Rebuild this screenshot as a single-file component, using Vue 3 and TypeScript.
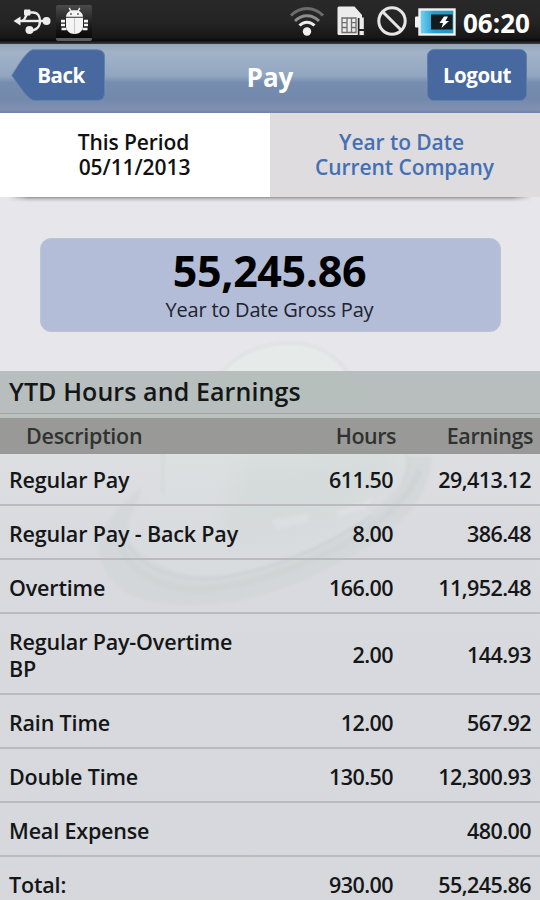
<script setup lang="ts">
interface PayRow {
  description: string
  hours: string
  earnings: string
  tall?: boolean
}

const rows: PayRow[] = [
  { description: 'Regular Pay', hours: '611.50', earnings: '29,413.12' },
  { description: 'Regular Pay - Back Pay', hours: '8.00', earnings: '386.48' },
  { description: 'Overtime', hours: '166.00', earnings: '11,952.48' },
  { description: 'Regular Pay-Overtime BP', hours: '2.00', earnings: '144.93', tall: true },
  { description: 'Rain Time', hours: '12.00', earnings: '567.92' },
  { description: 'Double Time', hours: '130.50', earnings: '12,300.93' },
  { description: 'Meal Expense', hours: '', earnings: '480.00' },
  { description: 'Total:', hours: '930.00', earnings: '55,245.86' },
]
</script>

<template>
  <div class="screen">
    <header class="status">
      <div class="status-left">
        <svg class="usb" width="40" height="30" viewBox="0 0 40 30">
          <g fill="none" stroke="#ededed" stroke-width="2.400">
            <path d="M6 15H34" />
            <path d="M10 15C14.500 14 13 6.500 18 6.500H21C26 6.500 28 11 28 15" />
            <path d="M18 24.500C24 24.500 28 21 28 15" />
          </g>
          <g fill="#ededed">
            <path d="M1.500 15L8.500 10.500V19.500Z" />
            <circle cx="34.500" cy="15" r="4" />
            <rect x="12" y="3.500" width="6.500" height="6" rx="1" />
            <circle cx="17.500" cy="24" r="4" />
          </g>
        </svg>
        <div class="debug">
          <svg width="30" height="30" viewBox="0 0 30 30">
            <g stroke="#f4f4f4" stroke-width="1.500" stroke-linecap="round">
              <path d="M9.500 2.500L11.500 6M19.500 2.500L17.500 6" />
            </g>
            <path d="M6 10.700C6.500 6 10 4.200 14.500 4.200S22.500 6 23 10.700Z" fill="#f4f4f4" />
            <circle cx="11" cy="8" r=".9" fill="#555" />
            <circle cx="18" cy="8" r=".9" fill="#555" />
            <path d="M6 11.700H23V20C23 24.500 19.500 28 14.500 28S6 24.500 6 20Z" fill="#f4f4f4" />
            <path d="M14.500 12V27.500" stroke="#c4c4c4" stroke-width="1" />
            <path d="M1 15.200H5M1 19H5M1.500 23H6.500M28 15.200H24M28 19H24M27.500 23H22.500" stroke="#f4f4f4" stroke-width="2.700" fill="none" />
          </svg>
        </div>
      </div>
      <div class="status-right">
        <svg width="36" height="32" viewBox="0 0 36 32">
          <g fill="none" stroke-width="3">
            <path d="M2 11.500C11 2 25 2 34 11.500" stroke="#6c6c6c" />
            <path d="M6 17C13 10 23 10 30 17" stroke="#8d8d8d" />
            <path d="M10.500 21.500C15 17 21 17 25.500 21.500" stroke="#ececec" />
          </g>
          <circle cx="18" cy="27.500" r="4.200" fill="#f0f0f0" />
        </svg>
        <svg width="30" height="32" viewBox="0 0 30 32">
          <path d="M3 1.500H18.500L26 10V16H23V30H3Q1.500 30 1.500 28.500V3Q1.500 1.500 3 1.500Z" fill="#ececec" />
          <path d="M6 13H20V27.500H6ZM6 17.700H11M15.500 17.700H20M6 22.500H11M15.500 22.500H20M11 13V27.500M15.500 13V27.500" fill="none" stroke="#6e6e6e" stroke-width="1.300" />
          <rect x="21.800" y="13" width="7.500" height="18" fill="#242424" />
          <rect x="23.500" y="12.500" width="4.300" height="11.500" fill="#ececec" />
          <rect x="23.500" y="26" width="4.300" height="4" fill="#ececec" />
        </svg>
        <svg width="32" height="32" viewBox="0 0 32 32">
          <circle cx="16" cy="16" r="13.200" fill="none" stroke="#e6e6e6" stroke-width="3" />
          <path d="M6.700 6.700L25.300 25.300" stroke="#e6e6e6" stroke-width="3" />
        </svg>
        <svg width="41" height="30" viewBox="0 0 41 30">
          <defs>
            <linearGradient id="charge" x1="0" x2="1" y1="0" y2="0">
              <stop offset="0" stop-color="#7bd5f5" />
              <stop offset=".4" stop-color="#25a0d3" />
              <stop offset="1" stop-color="#2494c5" />
            </linearGradient>
          </defs>
          <rect x="0" y="9.500" width="5" height="11" rx="1" fill="#f1f1f1" />
          <rect x="4.500" y="2.500" width="35" height="25" fill="url(#charge)" stroke="#f1f1f1" stroke-width="2.400" />
          <rect x="16" y="7.500" width="21.500" height="15" fill="#151a1d" />
          <path d="M29 9.500L24.500 16H28L26.500 21L34 14H30.500L33 9.500Z" fill="#fff" />
        </svg>
        <span class="clock">06:20</span>
      </div>
    </header>

    <nav class="bar">
      <button class="back">
        <svg class="back-shape" width="96" height="53" viewBox="0 0 96 53">
          <path d="M21.500 .8H86Q93.500 .8 93.500 8V44Q93.500 51.500 86 51.500H24C17 51.500 8 36 .8 26.500C7 17 15 2.500 21.500 .8Z" fill="#48699f" stroke="#6281ae" stroke-width="1" />
        </svg>
        <span class="back-label">Back</span>
      </button>
      <h1 class="title">Pay</h1>
      <button class="logout"><span>Logout</span></button>
    </nav>

    <div class="tabs">
      <div class="tab active"><span class="first">This Period</span><span>05/11/2013</span></div>
      <div class="tab"><span class="first">Year to Date</span><span>Current Company</span></div>
    </div>
    <div class="tab-shadow"></div>

    <main class="body">
      <svg class="hat" width="360" height="290" viewBox="90 330 360 290">
        <defs>
          <filter id="soft" x="-10%" y="-10%" width="120%" height="120%"><feGaussianBlur stdDeviation="1.500" /></filter>
          <filter id="softer" x="-20%" y="-20%" width="140%" height="140%"><feGaussianBlur stdDeviation="9" /></filter>
        </defs>
        <path d="M222 372C242 350 265 344 290 344C318 344 337 356 350 376L410 450C405 500 340 555 240 580C190 590 145 575 130 545C125 520 150 500 162 490V450Z" fill="#e6ebe9" opacity=".8" filter="url(#soft)" />
        <path d="M222 372C242 350 265 343 290 343C318 343 337 356 350 376" fill="none" stroke="#d8dddc" stroke-width="2.500" opacity=".7" filter="url(#soft)" />
        <path d="M240 460L400 452C400 500 330 535 220 540Z" fill="#c8dad2" opacity=".45" filter="url(#softer)" />
        <path d="M140 488C108 512 92 540 101 562C112 592 140 606 190 606C240 606 290 590 330 568C380 543 430 512 432 456H404C408 485 395 500 370 517C320 547 250 578 205 577C155 572 122 546 128 525C132 508 143 498 140 488Z" fill="#c3cfc9" opacity=".42" filter="url(#soft)" />
        <path d="M120 545C140 590 190 595 240 584C310 566 395 530 420 470" fill="none" stroke="#bccec4" opacity=".6" stroke-width="7" filter="url(#soft)" />
        <path d="M128 545C145 571 185 585 230 576C280 567 330 545 372 515" fill="none" stroke="#a6b6ae" opacity=".6" stroke-width="2" filter="url(#soft)" />
        <path d="M163 450V495M408 454C414 472 402 490 372 513" fill="none" stroke="#b8cac0" opacity=".4" stroke-width="2.500" filter="url(#soft)" />
        <path d="M272 520L308 514V522L276 530ZM336 511L374 498 366 509 338 517Z" fill="#fff" opacity=".5" filter="url(#soft)" />
      </svg>

      <section class="gross">
        <strong class="amount">55,245.86</strong>
        <span class="caption">Year to Date Gross Pay</span>
      </section>

      <section class="table">
        <h2 class="section-title"><span>YTD Hours and Earnings</span></h2>
        <div class="columns">
          <span class="c-desc">Description</span>
          <span class="c-hours">Hours</span>
          <span class="c-earn">Earnings</span>
        </div>
        <div v-for="row in rows" :key="row.description" class="row" :class="{ tall: row.tall }">
          <span class="desc">{{ row.description }}</span>
          <span class="hours">{{ row.hours }}</span>
          <span class="earn">{{ row.earnings }}</span>
        </div>
      </section>
    </main>
  </div>
</template>

<style>
body {
  margin: 0;
  overflow: hidden;
}
</style>

<style scoped>
.screen {
  width: 540px;
  height: 900px;
  overflow: hidden;
  display: flex;
  flex-direction: column;
  background: #e7e6eb;
  font-family: "Open Sans", "Noto Sans", sans-serif;
  font-weight: 650;
  color: #141617;
}
.status {
  flex: none;
  height: 44px;
  box-sizing: border-box;
  display: flex;
  justify-content: space-between;
  padding: 0 10px 0 12px;
  background: linear-gradient(#292929, #242424 50%, #171717 85%, #0b0b0b 92%, #3a3d42);
}
.status-left {
  display: flex;
}
.usb {
  margin-top: 6px;
}
.debug {
  width: 36px;
  height: 36px;
  margin: 5px 0 0 4px;
  box-sizing: border-box;
  padding: 1px 0 0 4px;
  border-radius: 2px;
  border-bottom: 3px solid #5e5e5e;
  background: linear-gradient(#4b4b4b, #1d1d1d 60%, #080808);
}
.status-right {
  display: flex;
  align-items: flex-start;
}
.status-right svg:nth-child(1) {
  margin: 4px 11px 0 0;
}
.status-right svg:nth-child(2) {
  margin: 5px 10px 0 0;
}
.status-right svg:nth-child(3) {
  margin: 5px 7px 0 0;
}
.status-right svg:nth-child(4) {
  margin: 7px 7px 0 0;
}
.clock {
  width: 67px;
  font-size: 26px;
  line-height: 46px;
  font-weight: 700;
  color: #fff;
  white-space: nowrap;
}
.bar {
  flex: none;
  height: 69px;
  box-sizing: border-box;
  display: grid;
  grid-template-columns: 96px 1fr 100px;
  padding: 5px 13px 0 11px;
  background: linear-gradient(#94a5b7, #a2b3c8 12%, #92a6c0 46%, #768daf 56%, #7389ac 80%, #8190b2 95%, #6e83a5);
}
button {
  border: 0;
  padding: 0;
  background: none;
  font: inherit;
  font-weight: 700;
  font-size: 20.500px;
  letter-spacing: -0.500px;
  color: #fff;
  text-align: center;
}
.back {
  display: grid;
  height: 53px;
}
.back-shape,
.back-label {
  grid-area: 1 / 1;
}
.back-label {
  line-height: 53px;
  padding-left: 4px;
}
.title {
  margin: 0;
  font-size: 26px;
  font-weight: 700;
  line-height: 56px;
  color: #fff;
  text-align: center;
  text-indent: 6px;
}
.logout {
  height: 52px;
  line-height: 51px;
  box-sizing: border-box;
  border-radius: 7px;
  background: #48699f;
  border: 1px solid #5f7dae;
}
.tabs {
  flex: none;
  height: 84px;
  display: grid;
  grid-template-columns: 270px 270px;
}
.tab {
  display: flex;
  flex-direction: column;
  align-items: center;
  box-sizing: border-box;
  padding-top: 17px;
  padding-right: 1px;
  font-size: 21px;
  line-height: 25px;
  letter-spacing: -0.080px;
  background: #dedcdf;
  color: #4470b3;
}
.tab .first {
  padding-right: 6px;
}
.tab.active {
  background: #fff;
  color: #111;
}
.tab.active .first {
  padding-right: 2px;
}
.tab-shadow {
  flex: none;
  height: 5px;
  margin: 0 8px;
  background: linear-gradient(#929295, #c3c3c6 40%, #e7e6eb);
  mask-image: linear-gradient(90deg, transparent, #000 20px, #000 504px, transparent);
}
.body {
  position: relative;
  flex: 1;
  padding-top: 36px;
}
.hat {
  position: absolute;
  left: 90px;
  top: 128px;
}
.gross {
  width: 461px;
  height: 94px;
  margin: 0 0 39px 40px;
  box-sizing: border-box;
  display: flex;
  flex-direction: column;
  align-items: center;
  border-radius: 11px;
  border: 1px solid #bbc4d3;
  background: #b3bdd7;
}
.amount {
  font-size: 43px;
  line-height: 64px;
  letter-spacing: -0.350px;
  padding-right: 2px;
  font-weight: 700;
  color: #000;
}
.caption {
  font-size: 20px;
  line-height: 24px;
  letter-spacing: -0.220px;
  margin-top: -5px;
  padding-right: 2px;
  font-weight: 400;
  color: #20232e;
}
.table {
  position: relative;
  background: linear-gradient(rgba(214, 215, 219, .3), rgba(211, 213, 217, .68) 30%, rgba(209, 211, 215, .76));
}
.section-title {
  height: 47px;
  margin: 0;
  box-sizing: border-box;
  padding-left: 9px;
  border-bottom: 4px solid #bcc0be;
  box-shadow: inset 0 -1px #9fa3a2;
  background: rgba(173, 181, 179, .8);
  font-size: 25px;
  line-height: 41px;
  letter-spacing: 0.100px;
  font-weight: 650;
}
.columns,
.row {
  display: grid;
  grid-template-columns: 243px 1fr 138px;
  align-items: center;
  font-size: 21.500px;
  line-height: 27px;
  letter-spacing: -0.170px;
}
.columns {
  height: 36px;
  box-sizing: border-box;
  padding-bottom: 1px;
  background: #999a97;
  color: #303231;
}
.c-desc {
  padding-left: 26px;
  letter-spacing: -0.260px;
}
.c-hours {
  text-align: right;
  padding-right: 6px;
  letter-spacing: -0.500px;
}
.c-earn {
  text-align: right;
  padding-right: 7px;
  letter-spacing: -0.400px;
}
.row {
  height: 54px;
  box-sizing: border-box;
  padding-top: 2px;
  border-bottom: 2px solid #b9bbbe;
}
.columns + .row {
  height: 52px;
  padding-top: 1px;
}
.row.tall {
  height: 81px;
}
.desc {
  padding-left: 9px;
}
.hours,
.earn {
  text-align: right;
  padding-right: 9px;
  letter-spacing: -0.560px;
}
</style>
